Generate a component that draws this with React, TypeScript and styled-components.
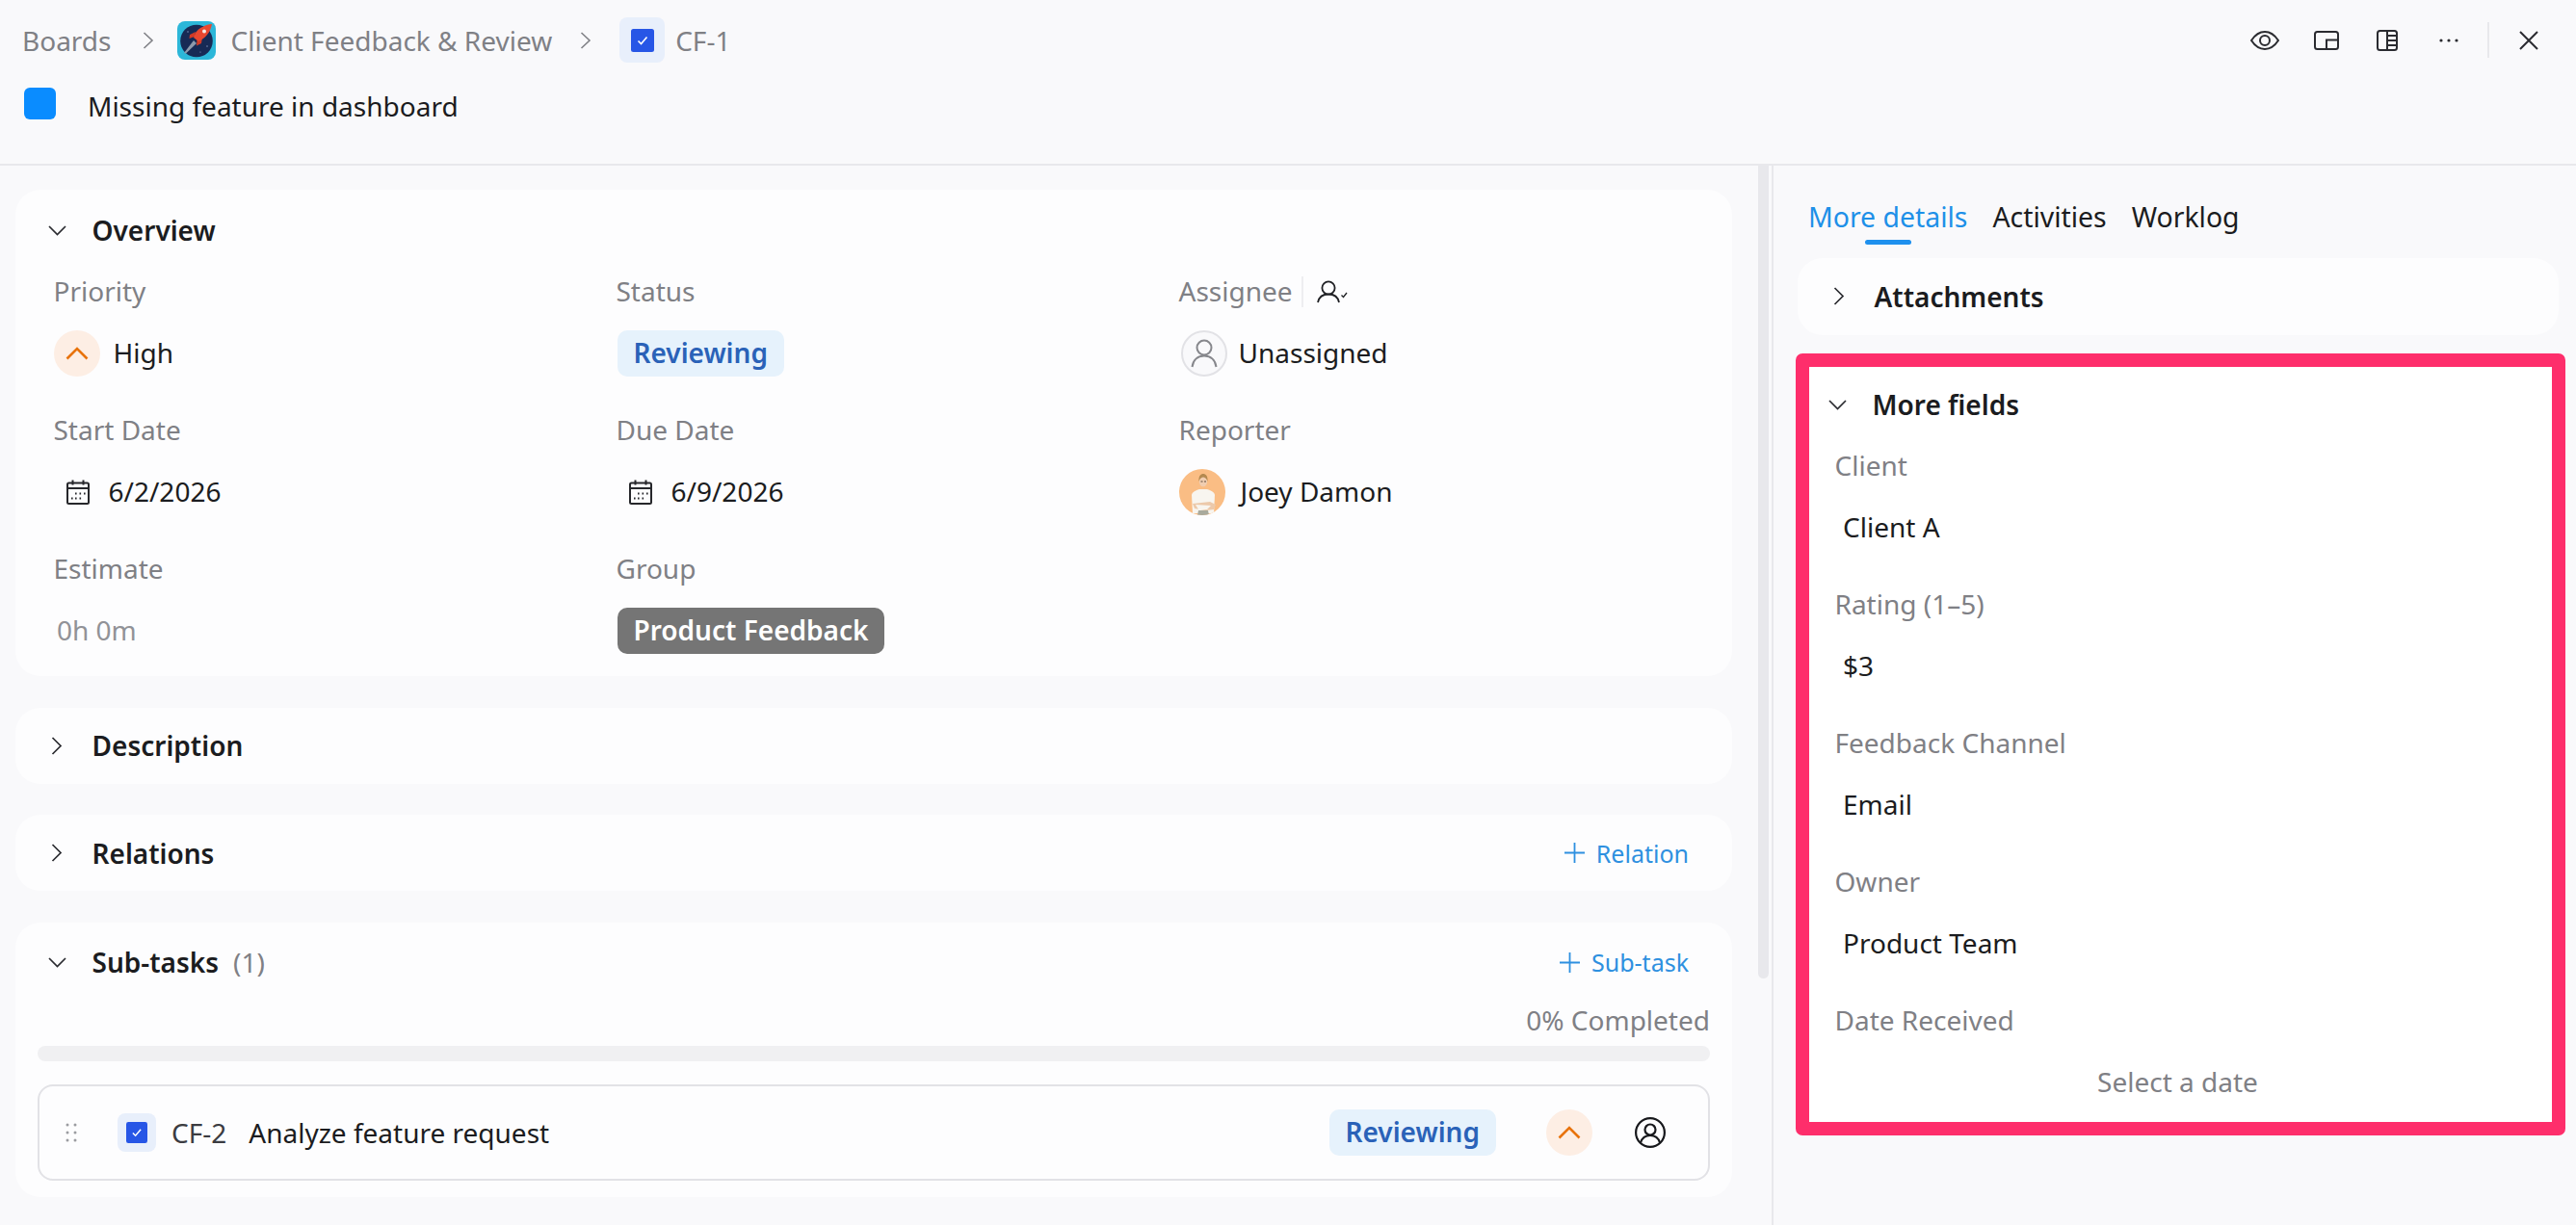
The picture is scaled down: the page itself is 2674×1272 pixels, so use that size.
import React from "react";
import styled, { createGlobalStyle } from "styled-components";

const GlobalStyle = createGlobalStyle`
  html, body {
    margin: 0;
    padding: 0;
    background: #f9f9fb;
  }

  * {
    box-sizing: border-box;
  }
`;

const Page = styled.div`
  width: 2674px;
  height: 1272px;
  overflow: hidden;
  display: flex;
  flex-direction: column;
  background: #f9f9fb;
  color: #1b1c20;
  font-family: "Noto Sans", "Open Sans", sans-serif;
  font-size: 28px;
  line-height: 40px;
`;

const Header = styled.header`
  height: 172px;
  flex: none;
  padding: 18px 39px 0 23px;
  border-bottom: 2px solid #e8e8ec;
`;

const Crumbs = styled.div`
  height: 47px;
  display: flex;
  align-items: center;
  color: #7f8085;
`;

const CrumbArrow = styled.svg<{ $before: number; $after: number }>`
  width: 12px;
  height: 18px;
  margin: 0 ${(p) => p.$after}px 0 ${(p) => p.$before}px;
  flex: none;
`;

const ProjectLogo = styled.svg`
  width: 40px;
  height: 40px;
  margin-right: 15px;
  flex: none;
`;

const TaskBadge = styled.span<{ $size: number; $inner: number }>`
  width: ${(p) => p.$size}px;
  height: ${(p) => p.$size}px;
  flex: none;
  display: flex;
  align-items: center;
  justify-content: center;
  border-radius: 8px;
  background: #e8effb;

  svg {
    width: ${(p) => p.$inner}px;
    height: ${(p) => p.$inner}px;
  }
`;

const CrumbKey = styled.span`
  margin-left: 11px;
`;

const Toolbar = styled.div`
  margin-left: auto;
  display: flex;
  align-items: center;
`;

const ToolIcon = styled.svg<{ $gap: number }>`
  display: block;
  flex: none;
  margin-left: ${(p) => p.$gap}px;
`;

const ToolDivider = styled.span`
  width: 2px;
  height: 37px;
  margin-left: 30px;
  background: #e8e8ec;
`;

const TitleRow = styled.div`
  margin-top: 26px;
  display: flex;
  align-items: flex-start;
  padding-left: 2px;
`;

const TypeSquare = styled.span`
  width: 33px;
  height: 33px;
  flex: none;
  border-radius: 6px;
  background: #0a8cff;
`;

const TitleText = styled.span`
  margin: -1px 0 0 33px;
`;

const Body = styled.main`
  flex: 1;
  display: flex;
  min-height: 0;
`;

const LeftPane = styled.section`
  position: relative;
  width: 1839px;
  flex: none;
  display: flex;
  flex-direction: column;
  gap: 32.7px;
  padding: 25px 41px 0 16px;
`;

const ScrollThumb = styled.div`
  position: absolute;
  top: 0;
  left: 1825px;
  width: 11px;
  height: 844px;
  border-radius: 0 0 6px 6px;
  background: #e8e8ec;
`;

const Card = styled.div<{ $pad?: string }>`
  border-radius: 26px;
  background: #fdfdfe;
  padding: ${(p) => p.$pad || "17.5px 0"};
`;

const SectionHead = styled.div<{ $indent?: number }>`
  height: 44px;
  display: flex;
  align-items: center;
  padding: 0 45px 0 ${(p) => p.$indent ?? 28}px;
`;

const ChevronBox = styled.span`
  width: 30px;
  flex: none;
  display: flex;
  justify-content: center;
  margin-right: 21.5px;
`;

const SectionTitle = styled.span`
  font-weight: 600;
`;

const Count = styled.span`
  margin-left: 15px;
  color: #7f8085;
`;

const Action = styled.span`
  margin-left: auto;
  display: flex;
  align-items: center;
  gap: 12px;
  font-size: 25px;
  color: #2e90e0;
`;

const FieldGrid = styled.div`
  margin-top: 22px;
  padding-left: 39.5px;
  display: grid;
  grid-template-columns: repeat(3, 584px);
  row-gap: 36px;
`;

const Field = styled.div``;

const FieldLabel = styled.div`
  height: 40px;
  display: flex;
  align-items: center;
  color: #7f8085;
`;

const LabelText = styled.span`
  padding-bottom: 3px;
`;

const LabelDivider = styled.span`
  width: 2px;
  height: 32px;
  margin: 0 14px 0 9px;
  background: #eeeef1;
`;

const FieldValue = styled.div<{ $indent?: number; $muted?: boolean; $center?: boolean }>`
  height: 48px;
  margin-top: 20px;
  display: flex;
  align-items: center;
  justify-content: ${(p) => (p.$center ? "center" : "flex-start")};
  padding-left: ${(p) => p.$indent ?? 0}px;
  color: ${(p) => (p.$muted ? "#7f8085" : "inherit")};
`;

const Muted = styled.span`
  padding-bottom: 3px;
  color: #919297;
`;

const Round = styled.span<{ $tone: "orange" | "plain" }>`
  width: 48px;
  height: 48px;
  flex: none;
  display: flex;
  align-items: center;
  justify-content: center;
  border-radius: 50%;
  background: ${(p) => (p.$tone === "orange" ? "#fdeee4" : "#f9f9fb")};
  border: ${(p) => (p.$tone === "orange" ? "none" : "2px solid #e2e2e6")};
`;

const ValueText = styled.span<{ $gap?: number }>`
  margin-left: ${(p) => p.$gap ?? 0}px;
  padding-bottom: 3px;
`;

const Chip = styled.span<{ $tone: "blue" | "gray" }>`
  height: 48px;
  display: inline-flex;
  align-items: center;
  padding: 0 17px 2px;
  border-radius: 10px;
  font-weight: 600;
  color: ${(p) => (p.$tone === "blue" ? "#2a62b8" : "#ffffff")};
  background: ${(p) => (p.$tone === "blue" ? "#e6f2fc" : "#757575")};
`;

const SubBody = styled.div`
  margin: 18px 23px 0;
`;

const Completed = styled.div`
  text-align: right;
  color: #7f8085;
`;

const ProgressTrack = styled.div`
  height: 16px;
  margin-top: 7px;
  border-radius: 8px;
  background: #f0f0f2;
`;

const SubRow = styled.div`
  height: 100px;
  margin-top: 24px;
  display: flex;
  align-items: center;
  padding: 0 44px 0 27px;
  border: 2px solid #e2e2e6;
  border-radius: 16px;
`;

const DragDots = styled.svg`
  width: 12px;
  height: 20px;
  flex: none;
  margin-right: 42px;
`;

const SubKey = styled.span`
  margin: 0 23px 0 16px;
  color: #3b3c41;
`;

const RowEnd = styled.div`
  margin-left: auto;
  display: flex;
  align-items: center;
`;

const RowGap = styled.span<{ $size: number }>`
  width: ${(p) => p.$size}px;
  flex: none;
`;

const RightPane = styled.aside`
  flex: 1;
  min-width: 0;
  border-left: 2px solid #e8e8ec;
`;

const Tabs = styled.nav`
  height: 82px;
  display: flex;
  gap: 26px;
  padding: 33px 0 0 36px;
  font-size: 28.4px;
`;

const Tab = styled.div<{ $active?: boolean }>`
  display: flex;
  flex-direction: column;
  align-items: center;
  color: ${(p) => (p.$active ? "#1e90e8" : "inherit")};

  &::after {
    content: "";
    width: 48px;
    height: 5px;
    margin-top: 4px;
    border-radius: 3px;
    background: ${(p) => (p.$active ? "#1e90ee" : "transparent")};
  }
`;

const SideCard = styled(Card)`
  width: 790px;
  height: 80px;
  margin: 14px 0 0 25px;
`;

const MoreFields = styled.div`
  width: 799px;
  height: 812px;
  margin: 19px 0 0 23px;
  padding: 17px 0 0;
  border: 14px solid #fe2e6b;
  border-radius: 7px;
  background: #ffffff;
`;

const FieldStack = styled.div`
  margin-top: 22.5px;
  padding: 0 32.5px 0 26.5px;
  display: flex;
  flex-direction: column;
  gap: 36px;
`;

const ChevronDown = () => (
  <svg width="19" height="11" viewBox="0 0 19 11" fill="none" stroke="#2a2b30" strokeWidth="1.7">
    <path d="M1 1l8.500 8.500L18 1" />
  </svg>
);

const ChevronRight = () => (
  <svg width="12" height="19" viewBox="0 0 12 19" fill="none" stroke="#2a2b30" strokeWidth="1.7">
    <path d="M1.500 1l8.500 8.500L1.500 18" />
  </svg>
);

const CrumbChevron = ({ before, after }: { before: number; after: number }) => (
  <CrumbArrow $before={before} $after={after} viewBox="0 0 12 18" fill="none" stroke="#808186" strokeWidth="1.6">
    <path d="M1.500 1l8.500 8-8.500 8" />
  </CrumbArrow>
);

const RocketLogo = () => (
  <ProjectLogo viewBox="0 0 40 40">
    <rect width="40" height="40" rx="8" fill="#2cb7d9" />
    <circle cx="20" cy="20.500" r="16.800" fill="#172a55" />
    <path d="M17 20L7 33l2 .5L20 23z" fill="#8d99ab" />
    <path d="M19 11l-6 3-.5 4 5.500-2zM26 17l-1 6-5 2.500.5-6z" fill="#d23a26" />
    <path d="M36 3c-6 .5-13 3.500-17 9l-2 5 5 4c7-3 12.500-9.500 14-18z" fill="#e9472f" />
    <circle cx="28" cy="10.500" r="2" fill="#f6ece6" />
    <circle cx="11" cy="11" r=".7" fill="#8fa3c9" />
    <circle cx="31" cy="26" r=".7" fill="#8fa3c9" />
    <circle cx="24" cy="32" r=".6" fill="#8fa3c9" />
  </ProjectLogo>
);

const TaskCheck = () => (
  <svg viewBox="0 0 24 24">
    <rect width="24" height="24" rx="2.500" fill="#2756e6" />
    <path d="M7.500 12.500l3 3 6-7" fill="none" stroke="#fff" strokeWidth="1.6" />
  </svg>
);

const UpCaret = () => (
  <svg width="24" height="14" viewBox="0 0 24 14" fill="none" stroke="#e8730c" strokeWidth="2.600">
    <path d="M1.500 12.500L12 2l10.500 10.500" />
  </svg>
);

const CalendarIcon = () => (
  <svg width="24" height="26" viewBox="0 0 24 26" fill="none" stroke="#26272b" strokeWidth="2">
    <rect x="1" y="3.500" width="22" height="21.500" rx="1.500" />
    <path d="M1 9h22M6.500 0.500v5M17.500 0.500v5" />
    <path d="M9 14.500h1.600M13.500 14.500h1.600M18 14.500h1.600M5 19.500h1.600M9 19.500h1.600M13.500 19.500h1.600" />
  </svg>
);

const PersonOutline = () => (
  <svg width="28" height="30" viewBox="0 0 28 30" fill="none" stroke="#86878c" strokeWidth="2">
    <circle cx="14" cy="9" r="7.500" />
    <path d="M1.500 29c1-7.500 6-11.500 12.500-11.500S25.500 21.500 26.500 29" />
  </svg>
);

const AssignToMe = () => (
  <svg width="32" height="24" viewBox="0 0 32 24" fill="none" stroke="#1f2024" strokeWidth="1.8">
    <circle cx="12" cy="8" r="6.600" />
    <path d="M1 23c1-5 5-8.500 11-8.500s10 3.500 11 8.500" />
    <path d="M25.500 15.500l2 2 3.500-4.500" strokeWidth="1.3" />
  </svg>
);

const ReporterAvatar = () => (
  <svg width="48" height="48" viewBox="0 0 48 48" style={{ flex: "none" }}>
    <clipPath id="reporter-clip">
      <circle cx="24" cy="24" r="24" />
    </clipPath>
    <g clipPath="url(#reporter-clip)">
      <rect width="48" height="48" fill="#fabd84" />
      <path d="M14 46l-1-19c0-3 5-5 8-6h8c3 1 8 3 8 6l-1 19z" fill="#f8f5ef" />
      <path d="M14 36l18-2 6 3-2 5-8 1-12-2z" fill="#ecc9aa" />
      <path d="M17 37l16 1-4 4h-9z" fill="#f8f5ef" />
      <ellipse cx="25" cy="13" rx="4.200" ry="5.200" fill="#f0cdb0" />
      <path d="M20.500 13c-.5-6 2-8 4.500-8s5 2 4.500 8c-1-3.500-3-4.500-4.500-4.500s-3.500 1-4.500 4.500z" fill="#b4894f" />
      <path d="M22.500 13h2M26 13h2" stroke="#4b3b2c" strokeWidth=".9" />
      <path d="M19 48l1-5h10l1 5z" fill="#a9aa9d" />
    </g>
  </svg>
);

const UserCircle = () => (
  <svg width="32" height="32" viewBox="0 0 32 32" fill="none" stroke="#17181c" strokeWidth="2.200">
    <circle cx="16" cy="16" r="14.900" />
    <circle cx="16" cy="13" r="5.500" />
    <path d="M6 26.500c1.500-5 5.500-7.500 10-7.500s8.500 2.500 10 7.500" />
  </svg>
);

const PlusIcon = () => (
  <svg width="21" height="21" viewBox="0 0 21 21" stroke="#2e90e0" strokeWidth="1.8">
    <path d="M10.500 0v21M0 10.500h21" />
  </svg>
);

function Section({ title, open, count, action }: { title: string; open?: boolean; count?: string; action?: string }) {
  return (
    <SectionHead>
      <ChevronBox>{open ? <ChevronDown /> : <ChevronRight />}</ChevronBox>
      <SectionTitle>{title}</SectionTitle>
      {count && <Count>{count}</Count>}
      {action && (
        <Action>
          <PlusIcon />
          {action}
        </Action>
      )}
    </SectionHead>
  );
}

const extraFields = [
  { label: "Client", value: "Client A" },
  { label: "Rating (1–5)", value: "$3" },
  { label: "Feedback Channel", value: "Email" },
  { label: "Owner", value: "Product Team" },
];

export default function App() {
  return (
    <Page>
      <GlobalStyle />
      <Header>
        <Crumbs>
          Boards
          <CrumbChevron before={33} after={24} />
          <RocketLogo />
          Client Feedback &amp; Review
          <CrumbChevron before={29} after={29} />
          <TaskBadge $size={47} $inner={24}>
            <TaskCheck />
          </TaskBadge>
          <CrumbKey>CF-1</CrumbKey>
          <Toolbar>
            <ToolIcon $gap={0} width="30" height="20" viewBox="0 0 30 20" fill="none" stroke="#2a2b30" strokeWidth="2">
              <path d="M1 10C5 4 9.500 1 15 1s10 3 14 9c-4 6-8.500 9-14 9S5 16 1 10z" />
              <circle cx="15" cy="10" r="5" />
            </ToolIcon>
            <ToolIcon $gap={36} width="26" height="20" viewBox="0 0 26 20" fill="none" stroke="#2a2b30" strokeWidth="2">
              <rect x="1" y="1" width="24" height="18" rx="2.500" />
              <path d="M13 19V9.500h12" />
            </ToolIcon>
            <ToolIcon $gap={39} width="22" height="22" viewBox="0 0 22 22" fill="none" stroke="#2a2b30" strokeWidth="2">
              <rect x="1" y="1" width="20" height="20" rx="2.500" />
              <path d="M11 1v20M11 6h10M11 11h10M11 16h10" />
            </ToolIcon>
            <ToolIcon $gap={43} width="20" height="4" viewBox="0 0 20 4" fill="#2a2b30">
              <circle cx="2" cy="2" r="1.600" />
              <circle cx="10" cy="2" r="1.600" />
              <circle cx="18" cy="2" r="1.600" />
            </ToolIcon>
            <ToolDivider />
            <ToolIcon $gap={31} width="20" height="20" viewBox="0 0 20 20" fill="none" stroke="#2a2b30" strokeWidth="2">
              <path d="M1 1l18 18M19 1L1 19" />
            </ToolIcon>
          </Toolbar>
        </Crumbs>
        <TitleRow>
          <TypeSquare />
          <TitleText>Missing feature in dashboard</TitleText>
        </TitleRow>
      </Header>

      <Body>
        <LeftPane>
          <ScrollThumb />
          <Card $pad="20px 0 23px">
            <Section title="Overview" open />
            <FieldGrid>
              <Field>
                <FieldLabel>
                  <LabelText>Priority</LabelText>
                </FieldLabel>
                <FieldValue>
                  <Round $tone="orange">
                    <UpCaret />
                  </Round>
                  <ValueText $gap={14}>High</ValueText>
                </FieldValue>
              </Field>
              <Field>
                <FieldLabel>
                  <LabelText>Status</LabelText>
                </FieldLabel>
                <FieldValue $indent={1}>
                  <Chip $tone="blue">Reviewing</Chip>
                </FieldValue>
              </Field>
              <Field>
                <FieldLabel>
                  <LabelText>Assignee</LabelText>
                  <LabelDivider />
                  <AssignToMe />
                </FieldLabel>
                <FieldValue $indent={2}>
                  <Round $tone="plain">
                    <PersonOutline />
                  </Round>
                  <ValueText $gap={12}>Unassigned</ValueText>
                </FieldValue>
              </Field>
              <Field>
                <FieldLabel>
                  <LabelText>Start Date</LabelText>
                </FieldLabel>
                <FieldValue $indent={13}>
                  <CalendarIcon />
                  <ValueText $gap={20}>6/2/2026</ValueText>
                </FieldValue>
              </Field>
              <Field>
                <FieldLabel>
                  <LabelText>Due Date</LabelText>
                </FieldLabel>
                <FieldValue $indent={13}>
                  <CalendarIcon />
                  <ValueText $gap={20}>6/9/2026</ValueText>
                </FieldValue>
              </Field>
              <Field>
                <FieldLabel>
                  <LabelText>Reporter</LabelText>
                </FieldLabel>
                <FieldValue>
                  <ReporterAvatar />
                  <ValueText $gap={16}>Joey Damon</ValueText>
                </FieldValue>
              </Field>
              <Field>
                <FieldLabel>
                  <LabelText>Estimate</LabelText>
                </FieldLabel>
                <FieldValue $indent={3.5}>
                  <Muted>0h 0m</Muted>
                </FieldValue>
              </Field>
              <Field>
                <FieldLabel>
                  <LabelText>Group</LabelText>
                </FieldLabel>
                <FieldValue $indent={1}>
                  <Chip $tone="gray">Product Feedback</Chip>
                </FieldValue>
              </Field>
            </FieldGrid>
          </Card>

          <Card>
            <Section title="Description" />
          </Card>

          <Card>
            <Section title="Relations" action="Relation" />
          </Card>

          <Card $pad="19px 0 17px">
            <Section title="Sub-tasks" open count="(1)" action="Sub-task" />
            <SubBody>
              <Completed>0% Completed</Completed>
              <ProgressTrack />
              <SubRow>
                <DragDots viewBox="0 0 12 20" fill="#9b9ca1">
                  <circle cx="2" cy="2" r="1.500" />
                  <circle cx="10" cy="2" r="1.500" />
                  <circle cx="2" cy="10" r="1.500" />
                  <circle cx="10" cy="10" r="1.500" />
                  <circle cx="2" cy="18" r="1.500" />
                  <circle cx="10" cy="18" r="1.500" />
                </DragDots>
                <TaskBadge $size={40} $inner={22}>
                  <TaskCheck />
                </TaskBadge>
                <SubKey>CF-2</SubKey>
                Analyze feature request
                <RowEnd>
                  <Chip $tone="blue">Reviewing</Chip>
                  <RowGap $size={52} />
                  <Round $tone="orange">
                    <UpCaret />
                  </Round>
                  <RowGap $size={44} />
                  <UserCircle />
                </RowEnd>
              </SubRow>
            </SubBody>
          </Card>
        </LeftPane>

        <RightPane>
          <Tabs>
            <Tab $active>More details</Tab>
            <Tab>Activities</Tab>
            <Tab>Worklog</Tab>
          </Tabs>
          <SideCard>
            <Section title="Attachments" />
          </SideCard>
          <MoreFields>
            <SectionHead $indent={14}>
              <ChevronBox>
                <ChevronDown />
              </ChevronBox>
              <SectionTitle>More fields</SectionTitle>
            </SectionHead>
            <FieldStack>
              {extraFields.map((f) => (
                <Field key={f.label}>
                  <FieldLabel>
                    <LabelText>{f.label}</LabelText>
                  </FieldLabel>
                  <FieldValue $indent={8.5}>
                    <ValueText>{f.value}</ValueText>
                  </FieldValue>
                </Field>
              ))}
              <Field>
                <FieldLabel>
                  <LabelText>Date Received</LabelText>
                </FieldLabel>
                <FieldValue $center $muted>
                  <ValueText>Select a date</ValueText>
                </FieldValue>
              </Field>
            </FieldStack>
          </MoreFields>
        </RightPane>
      </Body>
    </Page>
  );
}
